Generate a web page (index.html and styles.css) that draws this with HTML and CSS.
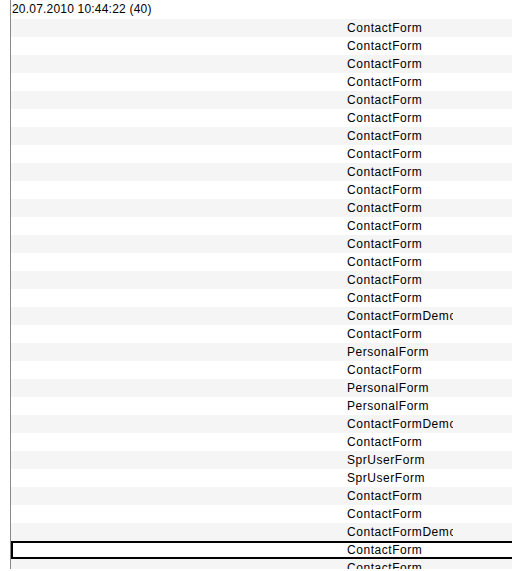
FILE: index.html
```html
<!DOCTYPE html>
<html>
<head>
<meta charset="utf-8">
<link rel="stylesheet" href="styles.css">
</head>
<body>
<div class="grid">
  <div class="header">20.07.2010 10:44:22 (40)</div>
  <div class="rows">
    <div class="row"><span class="cell">ContactForm</span></div>
    <div class="row"><span class="cell">ContactForm</span></div>
    <div class="row"><span class="cell">ContactForm</span></div>
    <div class="row"><span class="cell">ContactForm</span></div>
    <div class="row"><span class="cell">ContactForm</span></div>
    <div class="row"><span class="cell">ContactForm</span></div>
    <div class="row"><span class="cell">ContactForm</span></div>
    <div class="row"><span class="cell">ContactForm</span></div>
    <div class="row"><span class="cell">ContactForm</span></div>
    <div class="row"><span class="cell">ContactForm</span></div>
    <div class="row"><span class="cell">ContactForm</span></div>
    <div class="row"><span class="cell">ContactForm</span></div>
    <div class="row"><span class="cell">ContactForm</span></div>
    <div class="row"><span class="cell">ContactForm</span></div>
    <div class="row"><span class="cell">ContactForm</span></div>
    <div class="row"><span class="cell">ContactForm</span></div>
    <div class="row"><span class="cell">ContactFormDemo</span></div>
    <div class="row"><span class="cell">ContactForm</span></div>
    <div class="row"><span class="cell">PersonalForm</span></div>
    <div class="row"><span class="cell">ContactForm</span></div>
    <div class="row"><span class="cell">PersonalForm</span></div>
    <div class="row"><span class="cell">PersonalForm</span></div>
    <div class="row"><span class="cell">ContactFormDemo</span></div>
    <div class="row"><span class="cell">ContactForm</span></div>
    <div class="row"><span class="cell">SprUserForm</span></div>
    <div class="row"><span class="cell">SprUserForm</span></div>
    <div class="row"><span class="cell">ContactForm</span></div>
    <div class="row"><span class="cell">ContactForm</span></div>
    <div class="row"><span class="cell">ContactFormDemo</span></div>
    <div class="row selected"><span class="cell">ContactForm</span></div>
    <div class="row"><span class="cell">ContactForm</span></div>
  </div>
</div>
</body>
</html>
```

FILE: styles.css
```css
html, body {
  margin: 0;
  padding: 0;
  background: #ffffff;
}

body {
  font-family: "Liberation Sans", Arial, sans-serif;
  font-size: 12px;
  color: #000000;
  overflow: hidden;
}

.grid {
  margin-left: 10px;
  border-left: 1px solid #8a8a8a;
  height: 569px;
  overflow: hidden;
}

.header {
  height: 19px;
  line-height: 19px;
  padding-left: 1px;
  letter-spacing: 0.2px;
  white-space: nowrap;
}

.rows {
  display: flex;
  flex-direction: column;
}

.row {
  height: 18px;
  display: flex;
  align-items: center;
  padding-left: 335px;
}

.row:nth-child(odd) {
  background: #f5f5f5;
}

.cell {
  width: 106px;
  padding-left: 1px;
  overflow: hidden;
  white-space: nowrap;
  line-height: 18px;
  letter-spacing: 0.55px;
}

.row.selected {
  background: #ffffff;
  box-shadow: inset 2px 2px 0 #000000, inset 0 -2px 0 #000000;
}
```
